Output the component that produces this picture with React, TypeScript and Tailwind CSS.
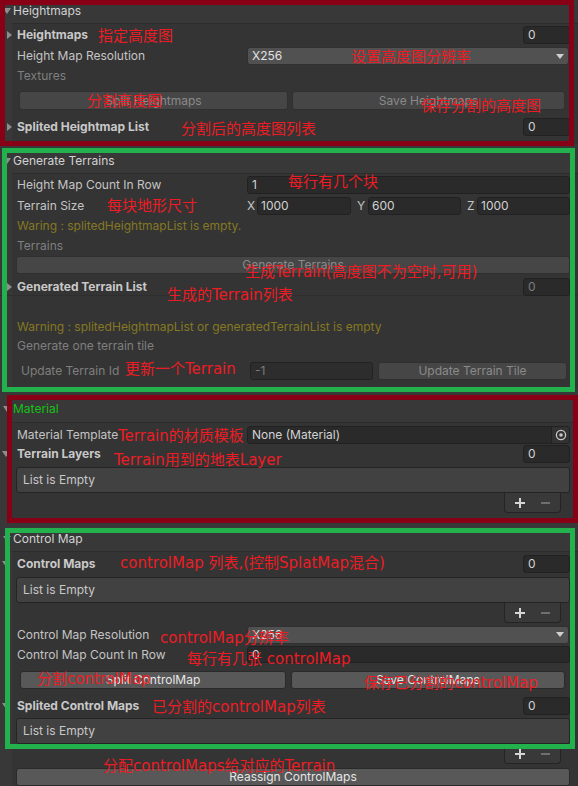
import type { ReactNode } from "react";

function Tri({ down, className = "" }: { down?: boolean; className?: string }) {
  if (down) {
    return (
      <svg width="8" height="6" viewBox="0 0 8 6" className={`shrink-0 ${className}`}>
        <polygon points="0,0 8,0 4,6" fill="#8e8e8e" />
      </svg>
    );
  }
  return (
    <svg width="5" height="8" viewBox="0 0 5 8" className={`shrink-0 ${className}`}>
      <polygon points="0,0 5,4 0,8" fill="#8e8e8e" />
    </svg>
  );
}

function SectionHeader({ title, className = "", textClass = "text-[#d2d2d2]" }: { title: string; className?: string; textClass?: string }) {
  return (
    <div className={`flex h-[18px] items-center ${className}`}>
      <Tri down className="ml-[3px]" />
      <span className={`ml-[2px] ${textClass}`}>{title}</span>
    </div>
  );
}

// grey box behind the fields of a section, starts at x=12
function Group({ children, className = "" }: { children: ReactNode; className?: string }) {
  return (
    <div className={`ml-[12px] border-t border-[#2c2c2c] bg-[#343434] ${className}`}>
      <div className="-ml-[12px]">{children}</div>
    </div>
  );
}

function IntField({ value, disabled }: { value: string; disabled?: boolean }) {
  return (
    <div
      className={`ml-auto mr-[8px] flex h-[18px] w-[47px] items-center rounded-[3px] border border-[#212121] bg-[#2a2a2a] pl-[4px] ${
        disabled ? "text-[#7c7c7c]" : "text-[#d2d2d2]"
      }`}
    >
      {value}
    </div>
  );
}

function ListFoldout({ title, down, className = "", disabled }: { title: string; down?: boolean; className?: string; disabled?: boolean }) {
  return (
    <div className={`flex h-[18px] items-center ${className}`}>
      {down ? <Tri down className="ml-[2px]" /> : <Tri className="ml-[7px]" />}
      <span className={`${down ? "ml-[7px]" : "ml-[5px]"} font-bold text-[#c8c8c8]`}>{title}</span>
      <IntField value="0" disabled={disabled} />
    </div>
  );
}

function Dropdown({ value }: { value: string }) {
  return (
    <div className="mr-[9px] flex h-[18px] flex-1 items-center rounded-[3px] border border-[#303030] bg-[#515151] pl-[4px] pr-[4px] text-[#e2e2e2]">
      <span>{value}</span>
      <svg width="8" height="5" viewBox="0 0 8 5" className="ml-auto">
        <polygon points="0,0 8,0 4,5" fill="#d0d0d0" />
      </svg>
    </div>
  );
}

function Label({ children, className = "" }: { children: ReactNode; className?: string }) {
  return <span className={`w-[247px] shrink-0 pl-[17px] ${className}`}>{children}</span>;
}

function Btn({ children, disabled, className = "" }: { children: ReactNode; disabled?: boolean; className?: string }) {
  return (
    <div
      className={`flex h-full items-center justify-center rounded-[3px] border ${
        disabled ? "border-[#303030] bg-[#464646] text-[#8a8a8a]" : "border-[#2a2a2a] bg-[#585858] text-[#e6e6e6]"
      } ${className}`}
    >
      {children}
    </div>
  );
}

function EmptyList({ className = "" }: { className?: string }) {
  return (
    <div className={className}>
      <div className="ml-[16px] mr-[8px] flex h-[26px] items-center rounded-[3px] border border-[#242424] bg-[#414141] pl-[6px] text-[#c8c8c8]">
        List is Empty
      </div>
      <div className="ml-[504px] flex h-[20px] w-[57px] items-center rounded-b-[4px] border border-t-0 border-[#242424] bg-[#393939]">
        <svg width="10" height="10" viewBox="0 0 10 10" className="ml-[10px]">
          <path d="M5 0V10M0 5H10" stroke="#d6d6d6" strokeWidth="2" />
        </svg>
        <svg width="9" height="10" viewBox="0 0 9 10" className="ml-[16px]">
          <path d="M0 5H9" stroke="#7e7e7e" strokeWidth="1.6" />
        </svg>
      </div>
    </div>
  );
}

const ann =
  "absolute whitespace-nowrap text-[15px] leading-[20px] text-[#ed1c24] font-['DejaVu_Sans','Noto_Sans_CJK_SC',sans-serif]";

export default function App() {
  return (
    <div className="relative h-[786px] w-[578px] overflow-hidden bg-[#383838] font-['Inter','Noto_Sans',sans-serif] text-[12px] text-[#c4c4c4]">
      {/* Heightmaps */}
      <SectionHeader title="Heightmaps" className="pt-[2px] h-[20px]" />
      <Group className="mt-[3px] pb-[8px]">
        <ListFoldout title="Heightmaps" className="mt-[2px]" />
        <div className="mt-[3px] flex h-[18px] items-center">
          <Label>Height Map Resolution</Label>
          <Dropdown value="X256" />
        </div>
        <div className="mt-[2px] flex h-[18px] items-center">
          <Label className="text-[#7f7f7f]">Textures</Label>
        </div>
        <div className="mt-[6px] flex h-[19px] gap-[4px] pl-[19px]">
          <Btn disabled className="w-[269px]">Split Heightmaps</Btn>
          <Btn disabled className="w-[273px]">Save Heightmaps</Btn>
        </div>
        <ListFoldout title="Splited Heightmap List" className="mt-[8px]" />
      </Group>

      {/* Generate Terrains */}
      <SectionHeader title="Generate Terrains" className="mt-[8px]" />
      <Group className="mt-[3px] pb-[9px]">
        <div className="mt-[2px] flex h-[18px] items-center">
          <Label>Height Map Count In Row</Label>
          <div className="mr-[8px] flex h-[18px] flex-1 items-center rounded-[3px] border border-[#212121] bg-[#2a2a2a] pl-[4px] text-[#d2d2d2]">1</div>
        </div>
        <div className="mt-[3px] flex h-[18px] items-center">
          <Label>Terrain Size</Label>
          <span className="w-[10px]">X</span>
          <div className="flex h-[18px] w-[94px] items-center rounded-[3px] border border-[#212121] bg-[#2a2a2a] pl-[3px] text-[#d2d2d2]">1000</div>
          <span className="ml-[6px] w-[11px]">Y</span>
          <div className="flex h-[18px] w-[93px] items-center rounded-[3px] border border-[#212121] bg-[#2a2a2a] pl-[3px] text-[#d2d2d2]">600</div>
          <span className="ml-[6px] w-[10px]">Z</span>
          <div className="flex h-[18px] w-[93px] items-center rounded-[3px] border border-[#212121] bg-[#2a2a2a] pl-[3px] text-[#d2d2d2]">1000</div>
        </div>
        <div className="mt-[2px] flex h-[18px] items-center pl-[17px] text-[#857823]">Waring : splitedHeightmapList is empty.</div>
        <div className="mt-[2px] flex h-[18px] items-center pl-[17px] text-[#7f7f7f]">Terrains</div>
        <div className="mt-[1px] flex h-[18px] pl-[16px] pr-[8px]">
          <Btn disabled className="w-full">Generate Terrains</Btn>
        </div>
        <ListFoldout title="Generated Terrain List" className="mt-[4px] border-b border-[#2e2e2e]" disabled />
        <div className="mt-[22px] flex h-[18px] items-center pl-[17px] text-[#857823]">
          Warning : splitedHeightmapList or generatedTerrainList is empty
        </div>
        <div className="mt-[1px] flex h-[18px] items-center pl-[17px] text-[#7f7f7f]">Generate one terrain tile</div>
        <div className="mt-[7px] flex h-[18px] items-center">
          <span className="w-[250px] shrink-0 pl-[21px] text-[#7f7f7f]">Update Terrain Id</span>
          <div className="flex h-[18px] w-[123px] items-center rounded-[3px] border border-[#222222] bg-[#2d2d2d] pl-[4px] text-[#7c7c7c]">-1</div>
          <Btn disabled className="ml-[5px] w-[189px]">Update Terrain Tile</Btn>
        </div>
      </Group>

      {/* Material */}
      <SectionHeader title="Material" className="mt-[11px]" textClass="text-[#16c016]" />
      <Group className="mt-[4px] pb-[7px]">
        <div className="mt-[3px] flex h-[18px] items-center">
          <Label>Material Template</Label>
          <div className="mr-[8px] flex h-[18px] flex-1 items-center overflow-hidden rounded-[3px] border border-[#212121] bg-[#2a2a2a] pl-[4px] text-[#d2d2d2]">
            <span>None (Material)</span>
            <div className="ml-auto flex h-full w-[18px] items-center justify-center border-l border-[#212121] bg-[#323232]">
              <svg width="12" height="12" viewBox="0 0 12 12">
                <circle cx="6" cy="6" r="4.6" fill="none" stroke="#c8c8c8" strokeWidth="1.3" />
                <circle cx="6" cy="6" r="1.8" fill="#c8c8c8" />
              </svg>
            </div>
          </div>
        </div>
        <ListFoldout title="Terrain Layers" down className="mt-[1px]" />
        <EmptyList className="mt-[4px]" />
      </Group>

      {/* Control Map */}
      <SectionHeader title="Control Map" className="mt-[10px]" />
      <Group className="mt-[3px]">
        <ListFoldout title="Control Maps" down className="mt-[3px]" />
        <EmptyList className="mt-[4px]" />
        <div className="mt-[3px] flex h-[17px] items-center">
          <Label>Control Map Resolution</Label>
          <Dropdown value="X256" />
        </div>
        <div className="mt-[3px] flex h-[17px] items-center">
          <Label>Control Map Count In Row</Label>
          <div className="mr-[8px] flex h-[17px] flex-1 items-center rounded-[3px] border border-[#212121] bg-[#2a2a2a] pl-[4px] text-[#d2d2d2]">0</div>
        </div>
        <div className="mt-[8px] flex h-[18px] gap-[5px] pl-[20px]">
          <Btn className="w-[266px]">Split ControlMap</Btn>
          <Btn className="w-[274px]">Save ControlMaps</Btn>
        </div>
        <ListFoldout title="Splited Control Maps" down className="mt-[8px]" />
        <EmptyList className="mt-[3px]" />
        <div className="mt-[4px] flex h-[18px] pl-[16px] pr-[8px]">
          <Btn className="w-full">Reassign ControlMaps</Btn>
        </div>
      </Group>

      {/* annotation frames */}
      <div className="pointer-events-none absolute left-0 top-0 h-[146px] w-[574px] border-[5px] border-[#880015]" />
      <div className="pointer-events-none absolute left-[2px] top-[148px] h-[244px] w-[573px] border-[5px] border-[#22b14c]" />
      <div className="pointer-events-none absolute left-[7px] top-[395px] h-[128px] w-[571px] border-[5px] border-[#880015]" />
      <div className="pointer-events-none absolute left-[5px] top-[528px] h-[221px] w-[570px] border-[5px] border-[#22b14c]" />

      {/* annotation notes */}
      <span className={`${ann} left-[98px] top-[26px]`}>指定高度图</span>
      <span className={`${ann} left-[351px] top-[47px]`}>设置高度图分辨率</span>
      <span className={`${ann} left-[87px] top-[91px]`}>分割高度图</span>
      <span className={`${ann} left-[421px] top-[96px]`}>保存分割的高度图</span>
      <span className={`${ann} left-[181px] top-[119px]`}>分割后的高度图列表</span>
      <span className={`${ann} left-[288px] top-[172px]`}>每行有几个块</span>
      <span className={`${ann} left-[107px] top-[196px]`}>每块地形尺寸</span>
      <span className={`${ann} left-[245px] top-[262px]`}>生成Terrain(高度图不为空时,可用)</span>
      <span className={`${ann} left-[167px] top-[285px]`}>生成的Terrain列表</span>
      <span className={`${ann} left-[125px] top-[359px]`}>更新一个Terrain</span>
      <span className={`${ann} left-[118px] top-[426px]`}>Terrain的材质模板</span>
      <span className={`${ann} left-[114px] top-[450px]`}>Terrain用到的地表Layer</span>
      <span className={`${ann} left-[120px] top-[553px]`}>controlMap 列表,(控制SplatMap混合)</span>
      <span className={`${ann} left-[160px] top-[628px]`}>controlMap分辨率</span>
      <span className={`${ann} left-[187px] top-[649px]`}>每行有几张 controlMap</span>
      <span className={`${ann} left-[37px] top-[669px]`}>分割controlMap</span>
      <span className={`${ann} left-[364px] top-[673px]`}>保存已分割的controlMap</span>
      <span className={`${ann} left-[152px] top-[697px]`}>已分割的controlMap列表</span>
      <span className={`${ann} left-[103px] top-[756px]`}>分配controlMaps给对应的Terrain</span>
    </div>
  );
}
